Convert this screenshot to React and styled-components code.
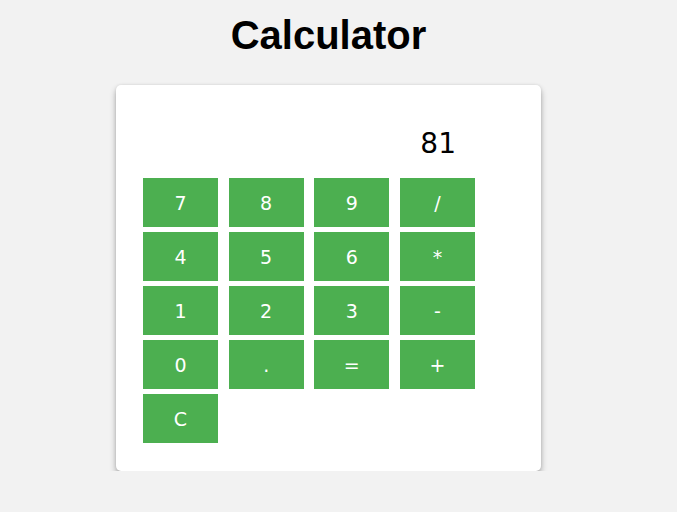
import React, { useState } from 'react';
import styled, { createGlobalStyle } from 'styled-components';

const GlobalStyle = createGlobalStyle`
    html, body {
        margin: 0;
        padding: 0;
        background-color: #f2f2f2;
    }
`

const Page = styled.div`
    width: 657px;
    display: flex;
    flex-direction: column;
    align-items: center;
    font-family: "Liberation Sans", Arial, sans-serif;
`

const Title = styled.h1`
    margin: 12px 0 27px;
    font-size: 40px;
    font-weight: bold;
    line-height: 46px;
    color: #000;
`

const Card = styled.div`
    box-sizing: border-box;
    width: 425px;
    height: 386px;
    padding: 39px 27px 28px;
    background-color: #fff;
    border-radius: 5px;
    box-shadow: 0 4px 6px rgba(0, 0, 0, 0.3), 0 0 3px rgba(0, 0, 0, 0.1);
`

const Display = styled.div`
    box-sizing: border-box;
    width: 332px;
    height: 40px;
    padding-right: 19px;
    margin-bottom: 14px;
    text-align: right;
    font-family: "DejaVu Sans", Verdana, sans-serif;
    font-size: 28px;
    line-height: 40px;
    color: #000;
`

const Keys = styled.div`
    display: grid;
    grid-template-columns: repeat(4, 75px);
    grid-auto-rows: 49px;
    column-gap: 10.67px;
    row-gap: 5px;
`

const Key = styled.button`
    border: none;
    margin: 0;
    padding: 0;
    background-color: #4caf50;
    color: #fff;
    font: 19px "DejaVu Sans", Verdana, sans-serif;
    cursor: pointer;
    &:hover {
        background-color: #45a049;
    }
`

const keys = ['7', '8', '9', '/', '4', '5', '6', '*', '1', '2', '3', '-', '0', '.', '=', '+', 'C']

export default () => {
    const [value, setValue] = useState('81')

    const press = (k) => {
        if (k === 'C') return setValue('')
        if (k === '=') {
            try {
                // eslint-disable-next-line no-new-func
                setValue(String(Function(`return (${value})`)()))
            } catch (e) {
                setValue('Error')
            }
            return
        }
        setValue(value + k)
    }

    return (
        <Page>
            <GlobalStyle />
            <Title>Calculator</Title>
            <Card>
                <Display>{value}</Display>
                <Keys>
                    {keys.map(k => (
                        <Key key={k} onClick={() => press(k)}>{k}</Key>
                    ))}
                </Keys>
            </Card>
        </Page>
    )
}
